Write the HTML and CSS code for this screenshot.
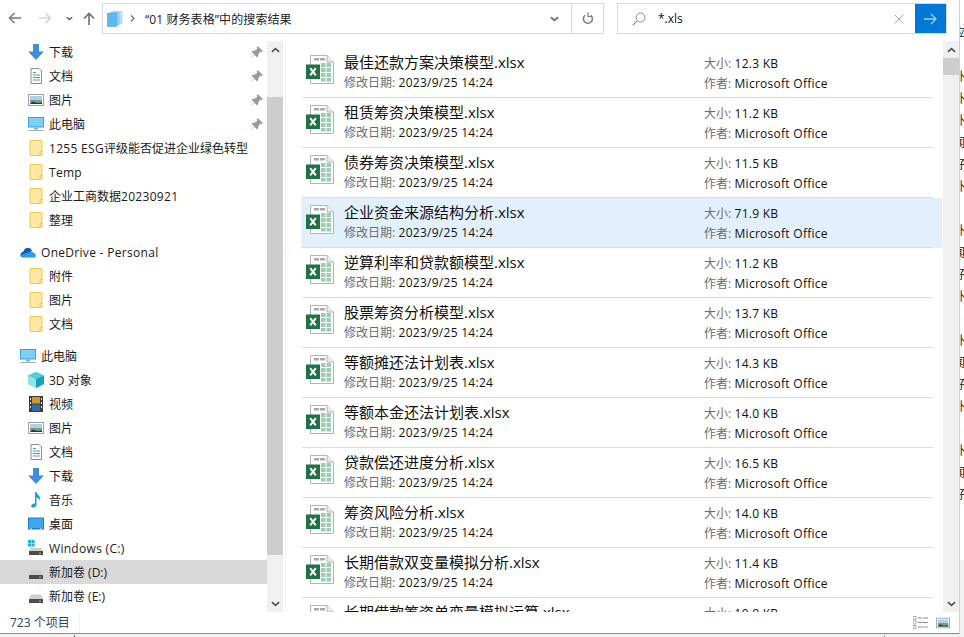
FILE: index.html
```html
<!DOCTYPE html>
<html lang="zh-CN">
<head>
<meta charset="utf-8">
<title>“01 财务表格”中的搜索结果</title>
<link rel="stylesheet" href="styles.css">
</head>
<body>
<svg class="sprite" width="0" height="0" aria-hidden="true">
  <symbol id="i-xlsx" viewBox="0 0 28 31">
    <path d="M4.500 1.500H21L27.500 8V29.500H4.500Z" fill="#fff" stroke="#b4b4b4"/>
    <path d="M21 1.500V8H27.500" fill="#ececec" stroke="#b4b4b4"/>
    <rect x="8" y="4" width="5" height="2.500" fill="#a8a8a8"/>
    <rect x="14" y="4" width="5" height="2.500" fill="#a8a8a8"/>
    <path d="M15 9h4.500v4H15zM20.500 9H25v4h-4.500zM15 14h4.500v4H15zM20.500 14H25v4h-4.500zM15 19h4.500v4H15zM20.500 19H25v4h-4.500zM15 24h4.500v3.500H15zM20.500 24H25v3.500h-4.500z" fill="#9dcdb0"/>
    <rect x="0" y="10.500" width="14" height="14.500" fill="#1f7146"/>
    <path d="M4.200 14.200L9.800 21.300M9.800 14.200L4.200 21.300" stroke="#fff" stroke-width="2" fill="none"/>
  </symbol>
  <symbol id="i-down" viewBox="0 0 16 16">
    <path d="M5 0H11V7.500H16L8 16L0 7.500H5Z" fill="#3d8fdd"/>
  </symbol>
  <symbol id="i-doc" viewBox="0 0 16 16">
    <path d="M3 .5H11L13.500 3V15.500H3Z" fill="#fff" stroke="#8e8e8e"/>
    <path d="M5 4.500H8M5 7H12M5 9.500H12M5 12H12" stroke="#3c9be0" stroke-width="1"/>
  </symbol>
  <symbol id="i-pic" viewBox="0 0 16 16">
    <rect x=".5" y="2.500" width="15" height="11" fill="#fff" stroke="#a2a2a2"/>
    <rect x="2" y="4" width="12" height="4" fill="#a6d3ee"/>
    <rect x="2" y="8" width="12" height="4" fill="#7d9c86"/>
    <path d="M2 12L5 9.500L9 11L14 10.500V12Z" fill="#1e3a38"/>
  </symbol>
  <symbol id="i-pc" viewBox="0 0 16 16">
    <rect x="0" y="1" width="16" height="10.500" fill="#3f9fe6"/>
    <rect x="1" y="2" width="14" height="8.500" fill="#7ad0f6"/>
    <rect x="6" y="11.500" width="4" height="2" fill="#8fa9bd"/>
    <rect x="0" y="14" width="16" height="1" fill="#9db0c0"/>
  </symbol>
  <symbol id="i-folder" viewBox="0 0 13 16">
    <path d="M.5 .5H12.500V15.500H.5Z" fill="#fde9a3" stroke="#ecc94f"/>
    <path d="M10.500 15.500V11.500H12.500" fill="none" stroke="#ecc94f"/>
  </symbol>
  <symbol id="i-cloud" viewBox="0 0 16 16">
    <path d="M3.500 7.500A4.500 4.500 0 0 1 12 6.500L8 11L1.500 13C-.500 11.500 .500 8 3.500 7.500Z" fill="#0a5db5"/>
    <path d="M3 13.500C.5 13.500 .500 10.500 3 10L8 8.500C10 7 12 7 13 8.500C15.500 8.500 16.500 11.500 15 13.500Z" fill="#2f9ae6"/>
  </symbol>
  <symbol id="i-3d" viewBox="0 0 16 16">
    <path d="M8 0L16 3.500V12L8 16L0 12V3.500Z" fill="#53d3dc"/>
    <path d="M0 3.500L8 7V16L0 12Z" fill="#8be6ea"/>
    <path d="M16 3.500L8 7V16L16 12Z" fill="#13a3be"/>
    <path d="M8 0L16 3.500L8 7L0 3.500Z" fill="#52cfdb"/>
  </symbol>
  <symbol id="i-video" viewBox="0 0 16 16">
    <rect x="1" y="0" width="14" height="16" fill="#3c3c3c"/>
    <rect x="4" y="1" width="8" height="6.500" fill="#c99a2e"/>
    <rect x="4" y="8.500" width="8" height="6.500" fill="#2f6cb3"/>
    <path d="M2 2h1v2H2zM2 6h1v2H2zM2 10h1v2H2zM13 2h1v2h-1zM13 6h1v2h-1zM13 10h1v2h-1z" fill="#ddd"/>
  </symbol>
  <symbol id="i-music" viewBox="0 0 16 16">
    <path d="M7 0H8.500C9 3 13.500 4 12 9C11.500 6.500 10 6 8.500 5.500V12.500C8.500 15 5 16.500 3.500 15C2.500 13.500 4.500 11 7 11.500Z" fill="#1e9be8"/>
  </symbol>
  <symbol id="i-desk" viewBox="0 0 16 16">
    <rect x="0" y="1.500" width="16" height="12" fill="#1f7fd4"/>
    <rect x="1" y="2.500" width="14" height="9.500" fill="#3ea6ee"/>
    <rect x="2" y="12.500" width="2" height=".8" fill="#fff"/>
    <rect x="12" y="12.500" width="2" height=".8" fill="#fff"/>
  </symbol>
  <symbol id="i-drive" viewBox="0 0 16 16">
    <path d="M3 6.500H13L15 11H1Z" fill="#cfcfcf"/>
    <rect x="1" y="11" width="14" height="4" rx=".5" fill="#4b4b4b"/>
    <rect x="11" y="12.500" width="2" height="1.500" fill="#3fdc3f"/>
  </symbol>
  <symbol id="i-win" viewBox="0 0 16 16">
    <path d="M0 0h3v3H0zM3.500 0h3v3h-3zM0 3.500h3v3H0zM3.500 3.500h3v3h-3z" fill="#18b4ee"/>
    <path d="M3 8H13L15 11H1Z" fill="#cfcfcf"/>
    <rect x="1" y="11" width="14" height="4" rx=".5" fill="#4b4b4b"/>
    <rect x="11" y="12.500" width="2" height="1.500" fill="#3fdc3f"/>
  </symbol>
  <symbol id="i-pin" viewBox="0 0 12 12">
    <path d="M7 0.500L11.500 5L10.500 6L9.500 5.500L7 8L7 10L6 11L1 6L2 5L4 5L6.500 2.500L6 1.500Z M3.500 8.500L.5 11.500" fill="#9a9a9a" stroke="#9a9a9a" stroke-width=".6"/>
  </symbol>
  <symbol id="i-up" viewBox="0 0 10 6">
    <path d="M1 5L5 1.500L9 5" fill="none" stroke="#505050" stroke-width="1.800"/>
  </symbol>
  <symbol id="i-dn" viewBox="0 0 10 6">
    <path d="M1 1L5 4.500L9 1" fill="none" stroke="#505050" stroke-width="1.800"/>
  </symbol>
</svg>

<div class="screen">
  <div class="window">
    <header class="toolbar">
      <div class="nav">
        <button class="nav-btn w-back" aria-label="后退"><svg width="14" height="12" viewBox="0 0 14 12"><path d="M13 6H2M6.500 1L1.500 6L6.500 11" fill="none" stroke="#7a7a7a" stroke-width="1.500"/></svg></button>
        <button class="nav-btn w-fwd" aria-label="前进"><svg width="14" height="12" viewBox="0 0 14 12"><path d="M1 6H12M7.500 1L12.500 6L7.500 11" fill="none" stroke="#d4d4d4" stroke-width="1.500"/></svg></button>
        <button class="nav-btn w-drop" aria-label="最近位置"><svg width="7" height="5" viewBox="0 0 10 6"><use href="#i-dn"/></svg></button>
        <button class="nav-btn w-upb" aria-label="向上"><svg width="12" height="13" viewBox="0 0 12 13"><path d="M6 13V2M1 6.500L6 1.500L11 6.500" fill="none" stroke="#6e6e6e" stroke-width="1.600"/></svg></button>
      </div>
      <div class="address">
        <svg class="addr-icon" width="16" height="16" viewBox="0 0 16 16"><rect x="6" y="0.500" width="9" height="12" fill="#bfe3f8" stroke="#8fc8ec" stroke-width=".6"/><rect x="3" y="1.500" width="9" height="12.500" fill="#8fd0f4" stroke="#6fb8e6" stroke-width=".6"/><rect x="0.500" y="2.500" width="9" height="13" fill="#5cb8ee" stroke="#4aa2dc" stroke-width=".6"/></svg>
        <svg class="crumb-sep" width="5" height="7" viewBox="0 0 5 7"><path d="M1 .5L4 3.500L1 6.500" fill="none" stroke="#6a6a6a" stroke-width="1.100"/></svg>
        <span class="addr-text">“01 财务表格”中的搜索结果</span>
        <button class="addr-btn addr-drop" aria-label="展开"><svg width="9" height="6" viewBox="0 0 10 6"><path d="M1 1L5 4.500L9 1" fill="none" stroke="#707070" stroke-width="2"/></svg></button>
        <button class="addr-btn addr-refresh" aria-label="刷新"><svg width="12" height="13" viewBox="0 0 12 13"><path d="M8.800 3.300A4.500 4.500 0 1 1 3 3.300" fill="none" stroke="#7d7d7d" stroke-width="1.500"/><path d="M6 .5V4.500H10" fill="none" stroke="#7d7d7d" stroke-width="1.200"/></svg></button>
      </div>
      <div class="search">
        <svg class="search-icon" width="14" height="14" viewBox="0 0 14 14"><circle cx="8.500" cy="5.500" r="4.500" fill="none" stroke="#8a8a8a"/><path d="M5.200 8.800L.8 13.200" stroke="#8a8a8a" stroke-width="1.100"/></svg>
        <span class="search-text">*.xls</span>
        <svg class="search-x" width="10" height="10" viewBox="0 0 10 10"><path d="M.5 .5L9.500 9.500M9.500 .5L.5 9.500" stroke="#a8a8a8" stroke-width="1"/></svg>
        <button class="search-go" aria-label="搜索"><svg width="13" height="12" viewBox="0 0 13 12"><path d="M0 6H12M7 1L12 6L7 11" fill="none" stroke="#9fd0f5" stroke-width="1.300"/></svg></button>
      </div>
    </header>

    <div class="content">
      <nav class="sidebar">
        <div class="tree">
          <div class="nav-group">
            <div class="item sub"><svg class="ic"><use href="#i-down"/></svg><span class="lbl">下载</span><svg class="pin"><use href="#i-pin"/></svg></div>
            <div class="item sub"><svg class="ic"><use href="#i-doc"/></svg><span class="lbl">文档</span><svg class="pin"><use href="#i-pin"/></svg></div>
            <div class="item sub"><svg class="ic"><use href="#i-pic"/></svg><span class="lbl">图片</span><svg class="pin"><use href="#i-pin"/></svg></div>
            <div class="item sub"><svg class="ic"><use href="#i-pc"/></svg><span class="lbl">此电脑</span><svg class="pin"><use href="#i-pin"/></svg></div>
            <div class="item sub"><svg class="ic"><use href="#i-folder"/></svg><span class="lbl"><span class="lat">1255 ESG</span>评级能否促进企业绿色转型</span></div>
            <div class="item sub"><svg class="ic"><use href="#i-folder"/></svg><span class="lbl lat">Temp</span></div>
            <div class="item sub"><svg class="ic"><use href="#i-folder"/></svg><span class="lbl">企业工商数据<span class="lat">20230921</span></span></div>
            <div class="item sub"><svg class="ic"><use href="#i-folder"/></svg><span class="lbl">整理</span></div>
          </div>
          <div class="nav-group">
            <div class="item head"><svg class="ic"><use href="#i-cloud"/></svg><span class="lbl lat">OneDrive - Personal</span></div>
            <div class="item sub"><svg class="ic"><use href="#i-folder"/></svg><span class="lbl">附件</span></div>
            <div class="item sub"><svg class="ic"><use href="#i-folder"/></svg><span class="lbl">图片</span></div>
            <div class="item sub"><svg class="ic"><use href="#i-folder"/></svg><span class="lbl">文档</span></div>
          </div>
          <div class="nav-group">
            <div class="item head"><svg class="ic"><use href="#i-pc"/></svg><span class="lbl">此电脑</span></div>
            <div class="item sub"><svg class="ic"><use href="#i-3d"/></svg><span class="lbl">3D 对象</span></div>
            <div class="item sub"><svg class="ic"><use href="#i-video"/></svg><span class="lbl">视频</span></div>
            <div class="item sub"><svg class="ic"><use href="#i-pic"/></svg><span class="lbl">图片</span></div>
            <div class="item sub"><svg class="ic"><use href="#i-doc"/></svg><span class="lbl">文档</span></div>
            <div class="item sub"><svg class="ic"><use href="#i-down"/></svg><span class="lbl">下载</span></div>
            <div class="item sub"><svg class="ic"><use href="#i-music"/></svg><span class="lbl">音乐</span></div>
            <div class="item sub"><svg class="ic"><use href="#i-desk"/></svg><span class="lbl">桌面</span></div>
            <div class="item sub"><svg class="ic"><use href="#i-win"/></svg><span class="lbl lat">Windows (C:)</span></div>
            <div class="item sub active"><svg class="ic"><use href="#i-drive"/></svg><span class="lbl">新加卷 (D:)</span></div>
            <div class="item sub"><svg class="ic"><use href="#i-drive"/></svg><span class="lbl">新加卷 (E:)</span></div>
          </div>
        </div>
        <div class="scrollbar side-scroll">
          <div class="sb-arrow"><svg width="9" height="6"><use href="#i-up"/></svg></div>
          <div class="sb-track"><div class="sb-thumb"></div></div>
          <div class="sb-arrow"><svg width="9" height="6"><use href="#i-dn"/></svg></div>
        </div>
      </nav>

      <main class="files">
        <div class="list">
          <div class="row"><div class="row-in"><svg class="xl"><use href="#i-xlsx"/></svg><div class="col-a"><div class="name">最佳还款方案决策模型.xlsx</div><div class="meta"><span class="k">修改日期:</span> 2023/9/25 14:24</div></div><div class="col-b"><div class="meta"><span class="k">大小:</span> 12.3 KB</div><div class="meta"><span class="k">作者:</span> Microsoft Office</div></div></div></div>
          <div class="row"><div class="row-in"><svg class="xl"><use href="#i-xlsx"/></svg><div class="col-a"><div class="name">租赁筹资决策模型.xlsx</div><div class="meta"><span class="k">修改日期:</span> 2023/9/25 14:24</div></div><div class="col-b"><div class="meta"><span class="k">大小:</span> 11.2 KB</div><div class="meta"><span class="k">作者:</span> Microsoft Office</div></div></div></div>
          <div class="row"><div class="row-in"><svg class="xl"><use href="#i-xlsx"/></svg><div class="col-a"><div class="name">债券筹资决策模型.xlsx</div><div class="meta"><span class="k">修改日期:</span> 2023/9/25 14:24</div></div><div class="col-b"><div class="meta"><span class="k">大小:</span> 11.5 KB</div><div class="meta"><span class="k">作者:</span> Microsoft Office</div></div></div></div>
          <div class="row selected"><div class="row-in"><svg class="xl"><use href="#i-xlsx"/></svg><div class="col-a"><div class="name">企业资金来源结构分析.xlsx</div><div class="meta"><span class="k">修改日期:</span> 2023/9/25 14:24</div></div><div class="col-b"><div class="meta"><span class="k">大小:</span> 71.9 KB</div><div class="meta"><span class="k">作者:</span> Microsoft Office</div></div></div></div>
          <div class="row"><div class="row-in"><svg class="xl"><use href="#i-xlsx"/></svg><div class="col-a"><div class="name">逆算利率和贷款额模型.xlsx</div><div class="meta"><span class="k">修改日期:</span> 2023/9/25 14:24</div></div><div class="col-b"><div class="meta"><span class="k">大小:</span> 11.2 KB</div><div class="meta"><span class="k">作者:</span> Microsoft Office</div></div></div></div>
          <div class="row"><div class="row-in"><svg class="xl"><use href="#i-xlsx"/></svg><div class="col-a"><div class="name">股票筹资分析模型.xlsx</div><div class="meta"><span class="k">修改日期:</span> 2023/9/25 14:24</div></div><div class="col-b"><div class="meta"><span class="k">大小:</span> 13.7 KB</div><div class="meta"><span class="k">作者:</span> Microsoft Office</div></div></div></div>
          <div class="row"><div class="row-in"><svg class="xl"><use href="#i-xlsx"/></svg><div class="col-a"><div class="name">等额摊还法计划表.xlsx</div><div class="meta"><span class="k">修改日期:</span> 2023/9/25 14:24</div></div><div class="col-b"><div class="meta"><span class="k">大小:</span> 14.3 KB</div><div class="meta"><span class="k">作者:</span> Microsoft Office</div></div></div></div>
          <div class="row"><div class="row-in"><svg class="xl"><use href="#i-xlsx"/></svg><div class="col-a"><div class="name">等额本金还法计划表.xlsx</div><div class="meta"><span class="k">修改日期:</span> 2023/9/25 14:24</div></div><div class="col-b"><div class="meta"><span class="k">大小:</span> 14.0 KB</div><div class="meta"><span class="k">作者:</span> Microsoft Office</div></div></div></div>
          <div class="row"><div class="row-in"><svg class="xl"><use href="#i-xlsx"/></svg><div class="col-a"><div class="name">贷款偿还进度分析.xlsx</div><div class="meta"><span class="k">修改日期:</span> 2023/9/25 14:24</div></div><div class="col-b"><div class="meta"><span class="k">大小:</span> 16.5 KB</div><div class="meta"><span class="k">作者:</span> Microsoft Office</div></div></div></div>
          <div class="row"><div class="row-in"><svg class="xl"><use href="#i-xlsx"/></svg><div class="col-a"><div class="name">筹资风险分析.xlsx</div><div class="meta"><span class="k">修改日期:</span> 2023/9/25 14:24</div></div><div class="col-b"><div class="meta"><span class="k">大小:</span> 14.0 KB</div><div class="meta"><span class="k">作者:</span> Microsoft Office</div></div></div></div>
          <div class="row"><div class="row-in"><svg class="xl"><use href="#i-xlsx"/></svg><div class="col-a"><div class="name">长期借款双变量模拟分析.xlsx</div><div class="meta"><span class="k">修改日期:</span> 2023/9/25 14:24</div></div><div class="col-b"><div class="meta"><span class="k">大小:</span> 11.4 KB</div><div class="meta"><span class="k">作者:</span> Microsoft Office</div></div></div></div>
          <div class="row"><div class="row-in"><svg class="xl"><use href="#i-xlsx"/></svg><div class="col-a"><div class="name">长期借款筹资单变量模拟运算.xlsx</div><div class="meta"><span class="k">修改日期:</span> 2023/9/25 14:24</div></div><div class="col-b"><div class="meta"><span class="k">大小:</span> 10.8 KB</div><div class="meta"><span class="k">作者:</span> Microsoft Office</div></div></div></div>
        </div>
        <div class="scrollbar file-scroll">
          <div class="sb-arrow"><svg width="9" height="6"><use href="#i-up"/></svg></div>
          <div class="sb-track"><div class="sb-thumb"></div></div>
          <div class="sb-arrow"><svg width="9" height="6"><use href="#i-dn"/></svg></div>
        </div>
      </main>
    </div>

    <footer class="status">
      <span class="count">723 个项目</span>
      <div class="views">
        <svg width="16" height="13" viewBox="0 0 16 13"><path d="M0 .5h3v3H0zM0 5h3v3H0zM0 9.500h3v3H0z" fill="none" stroke="#8e8e8e" stroke-width=".7"/><path d="M5 2h4M10 2h5M5 6.500h4M10 6.500h5M5 11h4M10 11h5" stroke="#8e8e8e"/></svg>
        <svg width="14" height="14"><use href="#i-pic"/></svg>
      </div>
    </footer>
  </div>

  <aside class="peek-right">
    <span>应</span><span>(</span><span>卧</span><span>卧</span><span>卧</span><span>闻</span><span>好</span><span>卧</span><span>(</span><span>卧</span><span>闻</span><span>好</span><span>卧</span><span>(</span><span>卧</span><span>闻</span><span>好</span><span>卧</span><span>(</span><span>卧</span><span>闻</span><span>好</span>
  </aside>
</div>
</body>
</html>
```

FILE: styles.css
```css
* { box-sizing: border-box; }

html, body {
  margin: 0;
  height: 100%;
  overflow: hidden;
  background: #fff;
  font-family: "Open Sans", "Noto Sans CJK SC", sans-serif;
  font-size: 12px;
  color: #111;
}

button {
  border: 0;
  padding: 0;
  background: none;
  display: flex;
  align-items: center;
  justify-content: center;
}

.sprite { display: block; height: 0; width: 0; }

.screen {
  width: 964px;
  height: 637px;
  display: flex;
  background:
    linear-gradient(#666, #666) 74px 635px / 1px 2px no-repeat,
    linear-gradient(#aaa, #aaa) 884px 635px / 1px 2px no-repeat,
    #f1f1f1;
}

.window {
  width: 960px;
  height: 634px;
  background: #fff;
  display: flex;
  flex-direction: column;
  border-bottom: 1px solid #8a8a8a;
  border-right: 1px solid #d0d0d0;
  flex: none;
}

/* toolbar */
.toolbar {
  height: 41px;
  flex: none;
  display: flex;
  padding-top: 3px;
  align-items: flex-start;
}

.nav { display: flex; width: 102px; height: 30px; align-items: center; }
.nav-btn { height: 30px; }
.w-back { width: 30px; }
.w-fwd { width: 30px; }
.w-drop { width: 19px; }
.w-upb { width: 23px; margin-left: -2px; }

.address {
  width: 502px;
  height: 31px;
  border: 1px solid #d9d9d9;
  display: flex;
  align-items: center;
  padding-left: 4px;
}
.addr-icon { flex: none; }
.crumb-sep { margin-left: 7px; flex: none; }
.addr-text { margin-left: 10px; flex: 1; font-size: 12px; color: #222; letter-spacing: .1px; }
.addr-btn { height: 29px; }
.addr-drop { width: 33px; }
.addr-refresh { width: 32px; border-left: 1px solid #d9d9d9; }

.search {
  margin-left: 13px;
  width: 330px;
  height: 31px;
  border: 1px solid #d9d9d9;
  display: flex;
  align-items: center;
  padding-left: 14px;
}
.search-icon { flex: none; }
.search-text { margin-left: 12px; flex: 1; color: #111; }
.search-x { flex: none; margin-right: 11px; }
.search-go { width: 31px; height: 29px; background: #0078d7; flex: none; }

/* content */
.content { flex: 1; min-height: 0; display: flex; }

.sidebar {
  width: 286px;
  flex: none;
  display: flex;
  border-right: 1px solid #f0f0f0;
  padding-right: 2px;
}

.tree { width: 267px; flex: none; height: 571px; overflow: hidden; }
.tree > .nav-group:first-child { margin-top: -1px; }
.nav-group { margin-bottom: 8px; }

.item { height: 24px; display: flex; align-items: center; white-space: nowrap; color: #1a1a1a; }
.item.sub { padding-left: 28px; }
.item.head { padding-left: 20px; }
.item.active { background: #d9d9d9; }
.ic { width: 16px; height: 16px; flex: none; }
.lbl { margin-left: 5px; flex: 1; }
.lat { letter-spacing: .3px; }
.pin { width: 12px; height: 12px; margin-right: 4px; flex: none; }

.scrollbar {
  width: 16px;
  flex: none;
  background: #f0f0f0;
  display: flex;
  flex-direction: column;
  height: 571px;
}
.sb-arrow { height: 17px; display: flex; align-items: center; justify-content: center; flex: none; }
.sb-track { flex: 1; min-height: 0; }
.sb-thumb { background: #cdcdcd; }
.side-scroll .sb-track { padding-top: 39px; }
.side-scroll .sb-thumb { height: 458px; }
.file-scroll .sb-thumb { height: 17px; }

.files { flex: 1; min-width: 0; display: flex; height: 571px; }
.list {
  flex: 1;
  min-width: 0;
  overflow: hidden;
  padding: 7px 0 0 15px;
  height: 571px;
}

.row { height: 50px; padding: 0 9px 0 1px; margin-right: 1px; }
.row.selected { background: #e2f0fd; }
.row-in {
  height: 50px;
  border-bottom: 1px solid #dcdcdc;
  display: flex;
  align-items: flex-start;
  padding: 6px 0 0 4px;
}
.xl { width: 28px; height: 31px; flex: none; }
.col-a { width: 360px; flex: none; margin-left: 10px; }
.col-b { flex: 1; }
.name { font-size: 15px; line-height: 20px; color: #111; margin-top: -2px; }
.col-a .meta { margin-top: 1px; }
.meta { font-size: 12px; line-height: 20px; color: #111; white-space: nowrap; letter-spacing: .27px; }
.k { color: #6d6d6d; letter-spacing: 0; }

/* status */
.status {
  height: 21px;
  flex: none;
  display: flex;
  align-items: center;
  justify-content: space-between;
  padding: 0 9px 0 10px;
}
.count { color: #2a4163; border-right: 1px solid #f0f0f0; padding-right: 9px; line-height: 21px; }
.views { display: flex; gap: 7px; align-items: center; }

/* neighbouring window peeking out at the right */
.peek-right {
  flex: 1;
  overflow: hidden;
  height: 560px;
  background: #fff;
  display: flex;
  flex-direction: column;
  font-size: 12px;
  line-height: 22px;
  color: #222;
  padding-top: 22px;
}
.peek-right span { margin-left: -7px; display: block; }
```
